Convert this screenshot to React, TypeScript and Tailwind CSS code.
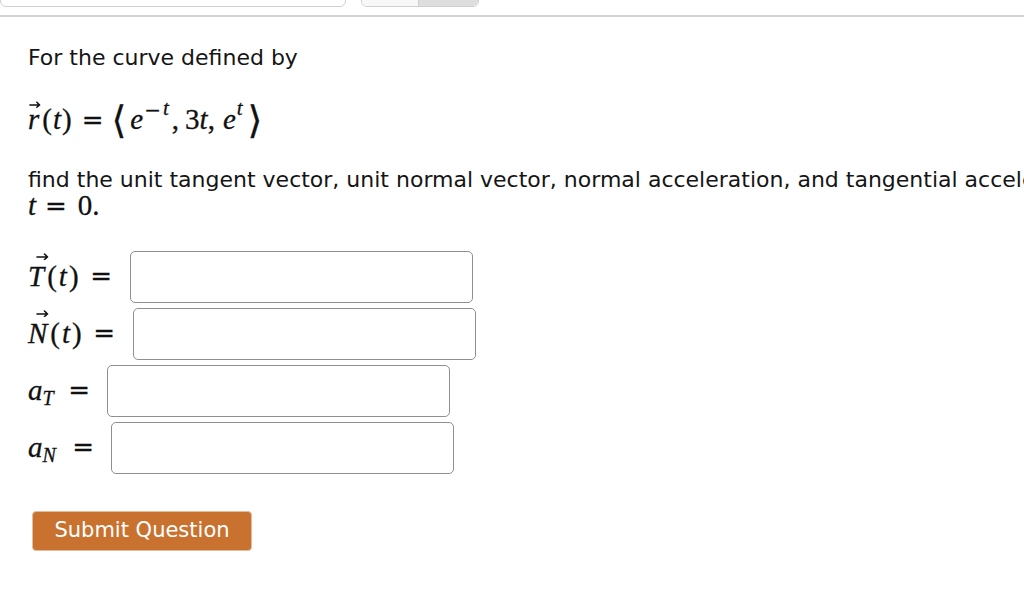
import type { ReactNode } from 'react';

const sans = { fontFamily: '"DejaVu Sans", Verdana, sans-serif' };
const serif = { fontFamily: '"Liberation Serif", "DejaVu Serif", serif' };
const eqFont = { fontFamily: '"DejaVu Serif", "Liberation Serif", serif' };

function Eq({ className = '' }: { className?: string }) {
    return (
        <span className={`text-[26px] ${className}`} style={eqFont}>
            =
        </span>
    );
}

function Vec({ children, cap = false }: { children: ReactNode; cap?: boolean }) {
    return (
        <span className="relative inline-block italic">
            {children}
            <svg
                className={`absolute h-[8px] ${cap ? 'top-[-3px] left-[7px] w-[15px]' : 'top-[2px] left-[1px] w-[12px]'}`}
                viewBox="0 0 13 8"
                fill="none"
                stroke="#111"
                strokeWidth="1.6"
                strokeLinecap="round"
                strokeLinejoin="round"
            >
                <path d="M1 5h10.5M8.5 2l3 3-3 2.5" />
            </svg>
        </span>
    );
}

function AnswerRow({ label, labelWidth, eqGap }: { label: ReactNode; labelWidth: string; eqGap: string }) {
    return (
        <div className="flex h-[57px] items-center">
            <div className={`flex shrink-0 items-center text-[29px] text-[#111] [-webkit-text-stroke:0.3px_#111] ${labelWidth}`} style={serif}>
                {label}
                <Eq className={`ml-auto ${eqGap}`} />
            </div>
            <input type="text" className="h-[52px] w-[343px] rounded-[5px] border-[1.5px] border-[#8f8f8f] bg-white outline-none" />
        </div>
    );
}

export default function App() {
    return (
        <div className="min-h-screen overflow-hidden bg-white text-[#151515]" style={sans}>
            <div className="flex h-[7px] items-end overflow-hidden">
                <div className="h-[30px] w-[346px] shrink-0 rounded-b-[6px] border-[1.5px] border-[#cfcfcf] bg-white" />
                <div className="ml-[15px] flex h-[30px] w-[118px] shrink-0 overflow-hidden rounded-b-[6px] border-[1.5px] border-[#cfcfcf]">
                    <div className="w-[56px] bg-[#f8f8f8]" />
                    <div className="flex-1 border-l border-[#cfcfcf] bg-[#dedede]" />
                </div>
            </div>
            <div className="mt-[8px] border-t-2 border-[#d2d2d2]" />

            <div className="px-[28px]">
                <p className="mt-[27px] text-[22px] leading-[28px]">For the curve defined by</p>

                <div className="mt-[28px] flex h-[40px] items-center text-[29px] text-[#111] [-webkit-text-stroke:0.3px_#111]" style={serif}>
                    <Vec>r</Vec>
                    <span className="ml-[3px]">(</span>
                    <span className="ml-[1px] italic">t</span>
                    <span className="ml-[1px]">)</span>
                    <Eq className="ml-[10px] mr-[8px]" />
                    <span className="text-[38px] leading-[38px]">⟨</span>
                    <span className="ml-[4px] italic">e</span>
                    <span className="relative top-[-10px] ml-[1px] text-[20px]" style={eqFont}>
                        −
                    </span>
                    <span className="relative top-[-11px] ml-[2px] text-[21px] italic">t</span>
                    <span className="ml-[3px]">,</span>
                    <span className="ml-[6px]">3</span>
                    <span className="italic">t</span>
                    <span>,</span>
                    <span className="ml-[8px] italic">e</span>
                    <span className="relative top-[-11px] ml-[1px] text-[21px] italic">t</span>
                    <span className="ml-[5px] text-[38px] leading-[38px]">⟩</span>
                </div>

                <p className="mt-[27px] whitespace-nowrap text-[22px] leading-[26px]">
                    find the unit tangent vector, unit normal vector, normal acceleration, and tangential acceleration at
                </p>
                <div className="flex h-[26px] items-center text-[29px] text-[#111] [-webkit-text-stroke:0.3px_#111]" style={serif}>
                    <span className="italic">t</span>
                    <Eq className="ml-[9px]" />
                    <span className="ml-[11px]">0.</span>
                </div>

                <div className="mt-[29px]">
                    <AnswerRow
                        labelWidth="w-[102px]"
                        eqGap="mr-[18px]"
                        label={
                            <>
                                <Vec cap>T</Vec>
                                <span className="ml-[3px]">(</span>
                                <span className="ml-[2px] italic">t</span>
                                <span className="ml-[2px]">)</span>
                            </>
                        }
                    />
                    <AnswerRow
                        labelWidth="w-[105px]"
                        eqGap="mr-[18px]"
                        label={
                            <>
                                <Vec cap>N</Vec>
                                <span className="ml-[3px]">(</span>
                                <span className="ml-[2px] italic">t</span>
                                <span className="ml-[2px]">)</span>
                            </>
                        }
                    />
                    <AnswerRow
                        labelWidth="w-[79px]"
                        eqGap="mr-[17px]"
                        label={
                            <>
                                <span className="italic">a</span>
                                <span className="relative top-[7px] text-[20px] italic">T</span>
                            </>
                        }
                    />
                    <AnswerRow
                        labelWidth="w-[83px]"
                        eqGap="mr-[17px]"
                        label={
                            <>
                                <span className="italic">a</span>
                                <span className="relative top-[7px] text-[20px] italic">N</span>
                            </>
                        }
                    />
                </div>

                <button
                    type="button"
                    className="ml-[4px] mt-[35px] h-[40px] w-[220px] rounded-[4px] border border-[#e2bc9e] bg-[#c9722f] text-[21px] text-white"
                    style={sans}
                >
                    Submit Question
                </button>
            </div>
        </div>
    );
}
